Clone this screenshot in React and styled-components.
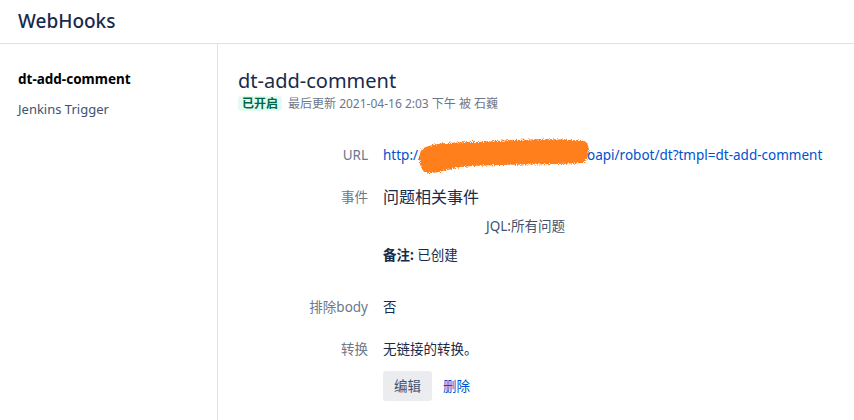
import React from 'react';
import styled, { createGlobalStyle } from 'styled-components';

const GlobalStyle = createGlobalStyle`
  html, body {
    margin: 0;
    padding: 0;
    background: #fff;
  }
  body {
    font-family: "Segoe UI", "Noto Sans", "Noto Sans CJK SC", sans-serif;
    color: #172b4d;
  }
`;

const Page = styled.div`
  width: 854px;
  height: 420px;
  display: flex;
  flex-direction: column;
  overflow: hidden;
`;

const Header = styled.header`
  height: 44px;
  box-sizing: border-box;
  border-bottom: 1px solid #dfe1e6;
  display: flex;
  align-items: center;
  padding: 0 18px 2px;
`;

const PageTitle = styled.h1`
  margin: 0;
  font-size: 19px;
  font-weight: 500;
  color: #172b4d;
`;

const Body = styled.div`
  flex: 1;
  display: flex;
`;

const Sidebar = styled.nav`
  width: 218px;
  box-sizing: border-box;
  border-right: 1px solid #dfe1e6;
  padding: 26px 18px;
  display: flex;
  flex-direction: column;
  gap: 12px;
`;

const SideItem = styled.a`
  font-size: ${({ active }) => (active ? 13.5 : 13)}px;
  line-height: 18px;
  color: ${({ active }) => (active ? '#000' : '#42526e')};
  font-weight: ${({ active }) => (active ? 700 : 400)};
  text-decoration: none;
`;

const Main = styled.main`
  flex: 1;
  padding: 25px 20px 0;
`;

const Title = styled.h2`
  margin: 0;
  font-size: 20px;
  line-height: 24px;
  font-weight: 400;
  color: #172b4d;
`;

const Meta = styled.div`
  display: flex;
  align-items: center;
  gap: 6px;
  font-size: 12px;
  color: #6b778c;
  margin-top: 1px;
`;

const Lozenge = styled.span`
  background: #e3fcef;
  color: #006644;
  font-weight: 700;
  font-size: 12px;
  line-height: 15px;
  padding: 0 4px;
  border-radius: 3px;
`;

const Fields = styled.div`
  display: grid;
  grid-template-columns: 130px 1fr;
  column-gap: 15px;
  margin-top: 33px;
  font-size: 13.5px;
`;

const Label = styled.div`
  text-align: right;
  color: #6b778c;
  line-height: 20px;
  padding-top: ${({ top }) => top || 0}px;
`;

const Value = styled.div`
  line-height: 20px;
  padding-top: ${({ top }) => top || 0}px;
  color: #172b4d;
`;

const Link = styled.a`
  color: #0052cc;
  text-decoration: none;
  display: inline-flex;
  align-items: center;
`;

const Redact = styled.svg`
  display: block;
  width: 172px;
  height: 40px;
  margin: -8px -4px -12px -4px;
  overflow: visible;
`;

const EventName = styled.div`
  font-size: 16px;
  line-height: 20px;
`;

const Jql = styled.div`
  padding-left: 103px;
  margin-top: 9px;
  color: #42526e;
`;

const Note = styled.div`
  margin-top: 9px;
  b {
    font-weight: 700;
  }
`;

const Actions = styled.div`
  display: flex;
  align-items: center;
  gap: 11px;
  margin-top: 12px;
`;

const Button = styled.button`
  height: 30px;
  padding: 0 11px;
  border: none;
  border-radius: 3px;
  background: #ebecf0;
  color: #42526e;
  font: inherit;
  font-size: 13.5px;
`;

const TextButton = styled.a`
  color: #0052cc;
  font-size: 13.5px;
`;

const Scribble = () => (
  <Redact viewBox="0 0 172 40">
    <defs>
      <filter id="rough" x="-10%" y="-30%" width="120%" height="160%">
        <feTurbulence type="fractalNoise" baseFrequency="0.9" numOctaves="2" seed="3" />
        <feDisplacementMap in="SourceGraphic" scale="5" />
      </filter>
    </defs>
    <path
      filter="url(#rough)"
      d="M3 12 C12 6 32 5 60 5 C100 2 140 1 166 4 C172 9 171 22 163 26 C130 28 80 27 42 30 C22 34 10 39 4 34 C-1 26 0 17 3 12 Z"
      fill="#ff7f1f"
    />
  </Redact>
);

export default function App() {
  return (
    <Page>
      <GlobalStyle />
      <Header>
        <PageTitle>WebHooks</PageTitle>
      </Header>
      <Body>
        <Sidebar>
          <SideItem active>dt-add-comment</SideItem>
          <SideItem>Jenkins Trigger</SideItem>
        </Sidebar>
        <Main>
          <Title>dt-add-comment</Title>
          <Meta>
            <Lozenge>已开启</Lozenge>
            <span>最后更新 2021-04-16 2:03 下午 被 石巍</span>
          </Meta>
          <Fields>
            <Label>URL</Label>
            <Value>
              <Link>
                http://
                <Scribble />
                oapi/robot/dt?tmpl=dt-add-comment
              </Link>
            </Value>
            <Label top={22}>事件</Label>
            <Value top={22}>
              <EventName>问题相关事件</EventName>
              <Jql>JQL:所有问题</Jql>
              <Note>
                <b>备注:</b> 已创建
              </Note>
            </Value>
            <Label top={32}>排除body</Label>
            <Value top={32}>否</Value>
            <Label top={22}>转换</Label>
            <Value top={22}>
              无链接的转换。
              <Actions>
                <Button>编辑</Button>
                <TextButton>删除</TextButton>
              </Actions>
            </Value>
          </Fields>
        </Main>
      </Body>
    </Page>
  );
}
